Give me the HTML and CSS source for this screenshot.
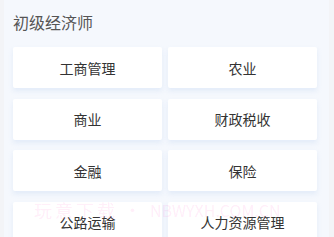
FILE: index.html
```html
<!DOCTYPE html>
<html lang="zh">
<head>
<meta charset="utf-8">
<link rel="stylesheet" href="styles.css">
</head>
<body>
<div class="page">
  <div class="title">初级经济师</div>
  <div class="grid">
    <div class="card">工商管理</div>
    <div class="card">农业</div>
    <div class="card">商业</div>
    <div class="card">财政税收</div>
    <div class="card">金融</div>
    <div class="card">保险</div>
    <div class="card">公路运输</div>
    <div class="card">人力资源管理</div>
  </div>
  <div class="watermark"><span class="wm-cn">玩意下载</span><span class="wm-dot">•</span><span class="wm-en">NBWYXH.COM.CN</span></div>
</div>
</body>
</html>
```
FILE: styles.css
```css
html, body {
  margin: 0;
  padding: 0;
  background: #f3f4f7;
  font-family: "Noto Sans CJK SC", "Noto Sans", sans-serif;
}
.page {
  position: relative;
  margin: 0 5px 0 4px;
  height: 237px;
  overflow: hidden;
  background: #f5f8fd;
  padding: 0 12px 0 9px;
}
.title {
  padding: 11px 0 14px;
  font-size: 16px;
  line-height: 22px;
  color: #555;
}
.grid {
  display: grid;
  grid-template-columns: 1fr 1fr;
  column-gap: 6px;
  row-gap: 10.5px;
}
.card {
  height: 41px;
  background: #fff;
  border-radius: 2px;
  box-shadow: 0 3px 5px rgba(205, 220, 245, 0.45);
  display: flex;
  align-items: center;
  justify-content: center;
  font-size: 14px;
  color: #333;
}
.watermark {
  position: absolute;
  left: 30px;
  top: 200px;
  display: flex;
  align-items: center;
  font-size: 17px;
  line-height: 20px;
  color: rgba(255, 90, 200, 0.11);
  white-space: nowrap;
  pointer-events: none;
}
.wm-cn {
  font-size: 18px;
  letter-spacing: 3px;
}
.wm-dot {
  margin: 0 9px 0 6px;
}
.wm-en {
  font-size: 16px;
}
```
